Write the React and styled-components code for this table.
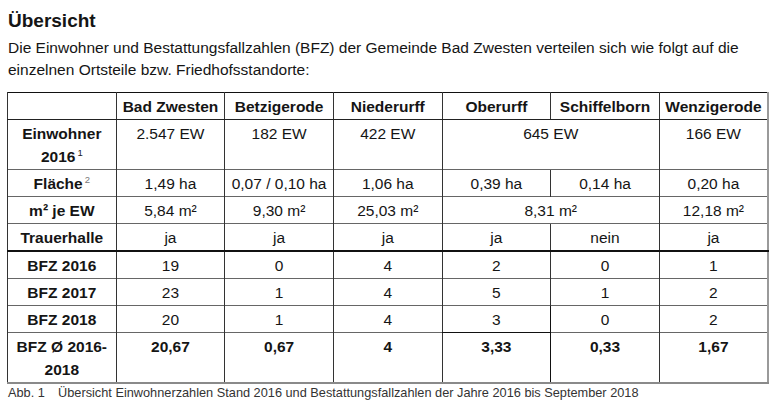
import React from "react";
import styled, { createGlobalStyle } from "styled-components";

const GlobalStyle = createGlobalStyle`
  html, body {
    margin: 0;
    padding: 0;
    background: #ffffff;
  }
  body {
    font-family: "Liberation Sans", Arial, sans-serif;
    color: #151515;
  }
`;

const Page = styled.div`
  width: 780px;
  height: 412px;
  padding: 10px 8px 0 8px;
  box-sizing: border-box;
  overflow: hidden;
`;

const Heading = styled.h2`
  margin: 0;
  font-size: 19px;
  line-height: 22px;
  font-weight: bold;
`;

const Intro = styled.p`
  margin: 5px 0 0 0;
  font-size: 15.5px;
  line-height: 22px;
  width: 745px;
`;

const Table = styled.table`
  margin: 11px 0 0 -1px;
  width: 762px;
  table-layout: fixed;
  border-collapse: collapse;
  border-top: 1px solid #111;
  border-left: 1px solid #333;
  border-right: 2px solid #9a9a9a;
  border-bottom: 2px solid #8a8a8a;
  font-size: 15.5px;
  line-height: 23px;
`;

const HeadCell = styled.th`
  padding: 2px 2px 1px;
  font-weight: bold;
  text-align: center;
  white-space: nowrap;
  border-left: 1px solid #333;
  border-bottom: 1px solid #222;
`;

const Row = styled.tr`
  & > td {
    border-top: ${(p) => (p.$strong ? "2px solid #111" : "1px solid #666")};
  }
`;

const Cell = styled.td`
  padding: 2px 2px 1px;
  text-align: center;
  vertical-align: top;
  white-space: nowrap;
  font-weight: ${(p) => (p.$bold ? "bold" : "normal")};
  border-left: 1px solid #333;
  ${(p) =>
    p.$boxed &&
    `
    border-right: 1px solid #111;
    border-bottom: 1px solid #111;
  `}
`;

const LabelCell = styled(Cell)`
  font-weight: bold;
`;

const Sup = styled.sup`
  font-size: 9.5px;
  font-weight: normal;
  line-height: 0;
  vertical-align: 6px;
  margin-left: 2px;
  color: ${(p) => (p.$muted ? "#777" : "#222")};
`;

const Caption = styled.div`
  margin-top: 1px;
  font-size: 12.75px;
  line-height: 16px;
  color: #333;
`;

const CaptionNo = styled.span`
  display: inline-block;
  width: 50px;
`;

const columns = [
  "Bad Zwesten",
  "Betzigerode",
  "Niederurff",
  "Oberurff",
  "Schiffelborn",
  "Wenzigerode",
];

// each cell: [text, colSpan]
const rows = [
  {
    label: (
      <>
        Einwohner
        <br />
        2016<Sup>1</Sup>
      </>
    ),
    cells: [["2.547 EW"], ["182 EW"], ["422 EW"], ["645 EW", 2], ["166 EW"]],
  },
  {
    label: (
      <>
        Fläche<Sup $muted>2</Sup>
      </>
    ),
    cells: [["1,49 ha"], ["0,07 / 0,10 ha"], ["1,06 ha"], ["0,39 ha"], ["0,14 ha"], ["0,20 ha"]],
  },
  {
    label: "m² je EW",
    cells: [["5,84 m²"], ["9,30 m²"], ["25,03 m²"], ["8,31 m²", 2], ["12,18 m²"]],
  },
  {
    label: "Trauerhalle",
    cells: [["ja"], ["ja"], ["ja"], ["ja"], ["nein"], ["ja"]],
  },
  {
    label: "BFZ 2016",
    strong: true,
    cells: [["19"], ["0"], ["4"], ["2"], ["0"], ["1"]],
  },
  {
    label: "BFZ 2017",
    cells: [["23"], ["1"], ["4"], ["5"], ["1"], ["2"]],
  },
  {
    label: "BFZ 2018",
    cells: [["20"], ["1"], ["4"], ["3"], ["0"], ["2"]],
    boxed: 3,
  },
  {
    label: (
      <>
        BFZ Ø 2016-
        <br />
        2018
      </>
    ),
    bold: true,
    cells: [["20,67"], ["0,67"], ["4"], ["3,33"], ["0,33"], ["1,67"]],
    boxed: 3,
  },
];

const App = () => {
  return (
    <Page>
      <GlobalStyle />
      <Heading>Übersicht</Heading>
      <Intro>
        Die Einwohner und Bestattungsfallzahlen (BFZ) der Gemeinde Bad Zwesten
        verteilen sich wie folgt auf die einzelnen Ortsteile bzw.
        Friedhofsstandorte:
      </Intro>
      <Table>
        <colgroup>
          {[0, 1, 2, 3, 4, 5, 6].map((i) => (
            <col key={i} />
          ))}
        </colgroup>
        <thead>
          <tr>
            <HeadCell />
            {columns.map((c) => (
              <HeadCell key={c}>{c}</HeadCell>
            ))}
          </tr>
        </thead>
        <tbody>
          {rows.map((row, r) => (
            <Row key={r} $strong={row.strong}>
              <LabelCell>{row.label}</LabelCell>
              {row.cells.map(([text, span], i) => (
                <Cell
                  key={i}
                  colSpan={span || 1}
                  $bold={row.bold}
                  $boxed={row.boxed === i}
                >
                  {text}
                </Cell>
              ))}
            </Row>
          ))}
        </tbody>
      </Table>
      <Caption>
        <CaptionNo>Abb. 1</CaptionNo>
        Übersicht Einwohnerzahlen Stand 2016 und Bestattungsfallzahlen der
        Jahre 2016 bis September 2018
      </Caption>
    </Page>
  );
};

export default App;
